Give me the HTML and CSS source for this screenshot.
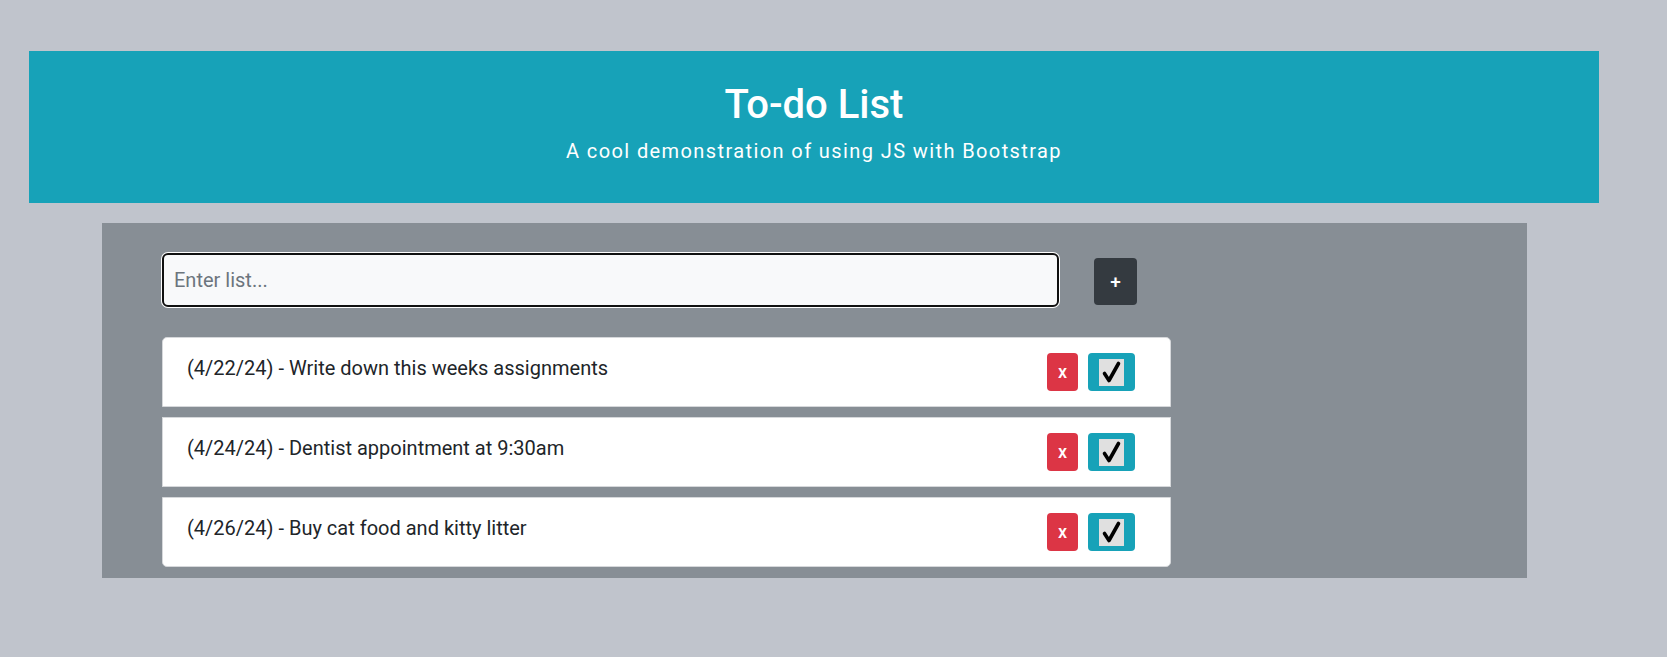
FILE: index.html
```html
<!DOCTYPE html>
<html lang="en">
<head>
<meta charset="utf-8">
<title>To-do List</title>
<link rel="stylesheet" href="styles.css">
</head>
<body>
  <header class="hero">
    <h1 class="hero-title">To-do List</h1>
    <p class="hero-lead">A cool demonstration of using JS with Bootstrap</p>
  </header>
  <main class="panel">
    <div class="entry-row">
      <input class="entry-input" type="text" placeholder="Enter list...">
      <button class="btn btn-add" type="button">+</button>
    </div>
    <ul class="todo-list">
      <li class="todo-item">
        <span class="todo-text">(4/22/24) - Write down this weeks assignments</span>
        <div class="todo-actions">
          <button class="btn btn-del" type="button">x</button>
          <button class="btn btn-done" type="button"><span class="check-box"><svg width="25" height="27" viewBox="0 0 25 27"><path d="M5.5 14.5 L10 21.5 L19.5 4.5" fill="none" stroke="#000" stroke-width="3.6" stroke-linecap="round" stroke-linejoin="round"/></svg></span></button>
        </div>
      </li>
      <li class="todo-item">
        <span class="todo-text">(4/24/24) - Dentist appointment at 9:30am</span>
        <div class="todo-actions">
          <button class="btn btn-del" type="button">x</button>
          <button class="btn btn-done" type="button"><span class="check-box"><svg width="25" height="27" viewBox="0 0 25 27"><path d="M5.5 14.5 L10 21.5 L19.5 4.5" fill="none" stroke="#000" stroke-width="3.6" stroke-linecap="round" stroke-linejoin="round"/></svg></span></button>
        </div>
      </li>
      <li class="todo-item">
        <span class="todo-text">(4/26/24) - Buy cat food and kitty litter</span>
        <div class="todo-actions">
          <button class="btn btn-del" type="button">x</button>
          <button class="btn btn-done" type="button"><span class="check-box"><svg width="25" height="27" viewBox="0 0 25 27"><path d="M5.5 14.5 L10 21.5 L19.5 4.5" fill="none" stroke="#000" stroke-width="3.6" stroke-linecap="round" stroke-linejoin="round"/></svg></span></button>
        </div>
      </li>
    </ul>
  </main>
</body>
</html>
```
FILE: styles.css
```css
* { box-sizing: border-box; }

html, body {
  margin: 0;
  padding: 0;
}

body {
  background: #c0c4cc;
  font-family: Roboto, "Liberation Sans", sans-serif;
  color: #212529;
  height: 657px;
  overflow: hidden;
}

.hero {
  margin: 51px 68px 0 29px;
  height: 152px;
  background: #17a2b8;
  color: #fff;
  text-align: center;
  padding-top: 30px;
}

.hero-title {
  margin: 0 0 7px;
  font-size: 40px;
  font-weight: 500;
  line-height: 48px;
}

.hero-lead {
  margin: 0;
  font-size: 20px;
  line-height: 30px;
  font-weight: 400;
  letter-spacing: 1.4px;
}

.panel {
  margin: 20px 0 0 102px;
  width: 1425px;
  height: 355px;
  background: #878e95;
  padding: 30px 0 0 60px;
}

.entry-row {
  display: flex;
  align-items: center;
  gap: 35px;
}

.entry-input {
  width: 897px;
  height: 54px;
  border: 2px solid #101010;
  border-radius: 6px;
  box-shadow: 0 0 0 1px #fff;
  background: #f8f9fa;
  font-family: Roboto, "Liberation Sans", sans-serif;
  font-size: 20px;
  color: #212529;
  padding: 0 10px;
  outline: none;
}

.entry-input::placeholder {
  color: #6c757d;
}

.btn {
  border: none;
  border-radius: 4px;
  color: #fff;
  font-family: Roboto, "Liberation Sans", sans-serif;
  padding: 0;
  display: flex;
  align-items: center;
  justify-content: center;
  cursor: pointer;
}

.btn-add {
  width: 43px;
  height: 47px;
  background: #343a40;
  font-size: 19px;
  font-weight: 500;
  margin-top: 3px;
}

.todo-list {
  list-style: none;
  margin: 30px 0 0 0;
  padding: 0;
  width: 1009px;
  display: flex;
  flex-direction: column;
  gap: 10px;
}

.todo-item {
  height: 70px;
  background: #fff;
  border: 1px solid #d6d8db;
  display: flex;
  align-items: flex-start;
  justify-content: space-between;
  padding: 15px 35px 0 24px;
}

.todo-item:first-child {
  border-radius: 5px 5px 0 0;
}

.todo-item:last-child {
  border-radius: 0 0 5px 5px;
}

.todo-text {
  font-size: 20px;
  line-height: 30px;
  margin-top: 0;
}

.todo-actions {
  display: flex;
  gap: 10px;
}

.btn-del {
  width: 31px;
  height: 38px;
  background: #dc3545;
  font-size: 18px;
  font-weight: 500;
  padding-bottom: 2px;
}

.btn-done {
  width: 47px;
  height: 38px;
  background: #17a2b8;
  align-items: flex-start;
  padding-top: 6px;
}

.check-box {
  width: 25px;
  height: 27px;
  background: #e0e0e0;
  display: block;
}

.check-box svg {
  display: block;
}
```
